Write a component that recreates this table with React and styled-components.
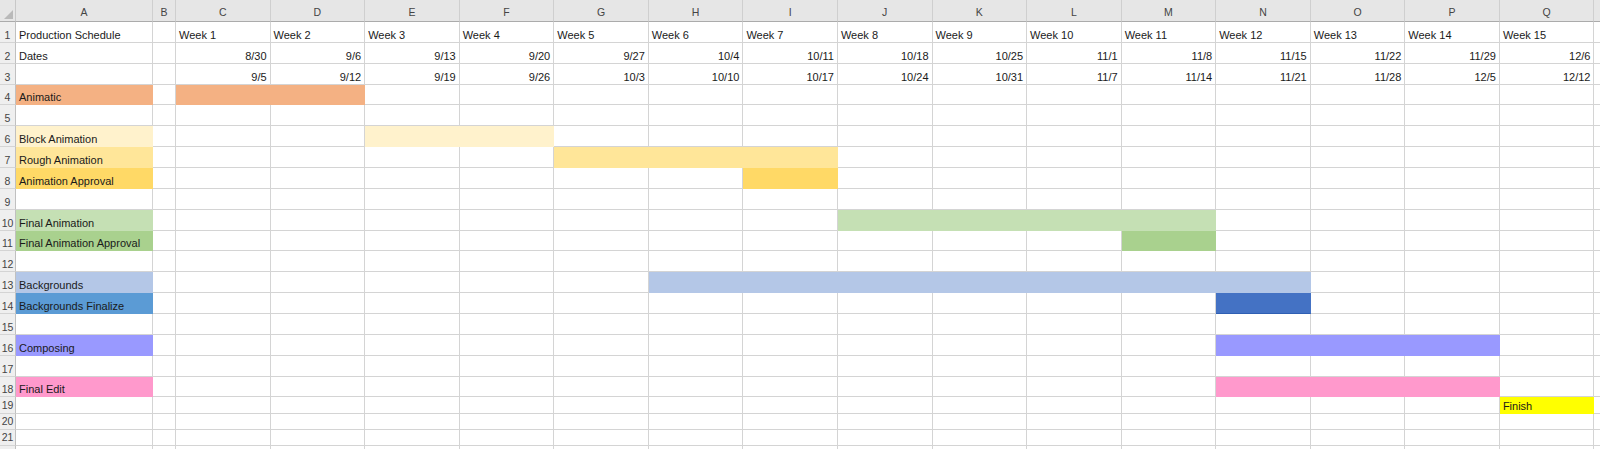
import styled, { createGlobalStyle } from 'styled-components';

const GlobalStyle = createGlobalStyle`
  html, body {
    margin: 0;
    padding: 0;
    background: #fff;
    overflow: hidden;
  }
  body {
    font-family: "Liberation Sans", Arial, sans-serif;
  }
`;

const COLS = 'CDEFGHIJKLMNOPQ'.split('');
const STARTS = ['8/30', '9/6', '9/13', '9/20', '9/27', '10/4', '10/11', '10/18', '10/25', '11/1', '11/8', '11/15', '11/22', '11/29', '12/6'];
const ENDS = ['9/5', '9/12', '9/19', '9/26', '10/3', '10/10', '10/17', '10/24', '10/31', '11/7', '11/14', '11/21', '11/28', '12/5', '12/12'];

// each task: label colour in A, bar colour over week columns [from, to]
const rows = [
  { n: 1, label: 'Production Schedule', weeks: COLS.map((_, i) => `Week ${i + 1}`) },
  { n: 2, label: 'Dates', weeks: STARTS, right: true },
  { n: 3, weeks: ENDS, right: true },
  { n: 4, label: 'Animatic', fill: '#f4b183', bar: [0, 1] },
  { n: 5 },
  { n: 6, label: 'Block Animation', fill: '#fff2cc', bar: [2, 3] },
  { n: 7, label: 'Rough Animation', fill: '#ffe699', bar: [4, 6] },
  { n: 8, label: 'Animation Approval', fill: '#ffd966', bar: [6, 6] },
  { n: 9 },
  { n: 10, label: 'Final Animation', fill: '#c5e0b4', bar: [7, 10] },
  { n: 11, label: 'Final Animation Approval', fill: '#a9d18e', bar: [10, 10] },
  { n: 12 },
  { n: 13, label: 'Backgrounds', fill: '#b4c7e7', bar: [5, 11] },
  { n: 14, label: 'Backgrounds Finalize', fill: '#5b9bd5', bar: [11, 11], barFill: '#4472c4', edge: '#2f5fb3' },
  { n: 15 },
  { n: 16, label: 'Composing', fill: '#9999ff', bar: [11, 13] },
  { n: 17 },
  { n: 18, label: 'Final Edit', fill: '#ff99cc', bar: [11, 13] },
  { n: 19, finish: true, short: true },
  { n: 20, short: true },
  { n: 21, short: true },
  { n: 22, short: true },
];

const Sheet = styled.div`
  display: grid;
  grid-template-columns: 16px 137px 23px repeat(15, 94.57px) 1fr;
  grid-template-rows: 22px repeat(18, 20.87px) 16.6px 15.8px 15.8px 24px;
  width: 1600px;
  height: 449px;
  overflow: hidden;
  font-size: 11px;
  color: #1a1a1a;
`;

const Corner = styled.div`
  position: relative;
  background: #e6e6e6;
  border-right: 1px solid #c8c8c8;
  border-bottom: 1px solid #ababab;

  &::after {
    content: '';
    position: absolute;
    right: 2px;
    bottom: 2px;
    width: 0;
    height: 0;
    border-left: 9px solid transparent;
    border-bottom: 9px solid #b9b9b9;
  }
`;

const ColHead = styled.div`
  display: flex;
  align-items: flex-end;
  justify-content: center;
  padding-bottom: 3px;
  box-sizing: border-box;
  background: #e6e6e6;
  border-right: 1px solid #cfcfcf;
  border-bottom: 1px solid #ababab;
  color: #444;
  font-size: 10.5px;
  line-height: 12px;
`;

const RowHead = styled.div`
  display: flex;
  align-items: ${p => (p.$short ? 'center' : 'flex-end')};
  justify-content: center;
  padding-bottom: 1px;
  background: #efefef;
  border-right: 1px solid #c0c0c0;
  border-bottom: 1px solid #d4d4d4;
  color: #444;
  font-size: 10.5px;
  line-height: 12px;
  box-sizing: border-box;
`;

const Cell = styled.div`
  display: flex;
  align-items: flex-end;
  justify-content: ${p => (p.$right ? 'flex-end' : 'flex-start')};
  padding: 0 3px 1px;
  box-sizing: border-box;
  overflow: visible;
  white-space: nowrap;
  line-height: 12px;
  background: ${p => p.$fill || '#fff'};
  border-right: 1px solid ${p => p.$fill || '#d4d4d4'};
  border-bottom: 1px solid ${p => p.$edge || p.$fill || '#d4d4d4'};
`;

function SheetRow({ row }) {
  const cells = COLS.map((_, i) => {
    const inBar = row.bar && i >= row.bar[0] && i <= row.bar[1];
    const isFinish = row.finish && i === 14;
    const fill = inBar ? row.barFill || row.fill : isFinish ? '#ffff00' : undefined;
    return (
      <Cell key={i} $fill={fill} $edge={inBar ? row.edge : undefined} $right={row.right}>
        {row.weeks ? row.weeks[i] : isFinish ? 'Finish' : ''}
      </Cell>
    );
  });

  return (
    <>
      <RowHead $short={row.short}>{row.n}</RowHead>
      <Cell $fill={row.fill}>{row.label}</Cell>
      <Cell />
      {cells}
      <Cell />
    </>
  );
}

export default function App() {
  return (
    <>
      <GlobalStyle />
      <Sheet>
        <Corner />
        {['A', 'B', ...COLS, 'R'].map(c => (
          <ColHead key={c}>{c === 'R' ? '' : c}</ColHead>
        ))}
        {rows.map(r => (
          <SheetRow key={r.n} row={r} />
        ))}
      </Sheet>
    </>
  );
}
